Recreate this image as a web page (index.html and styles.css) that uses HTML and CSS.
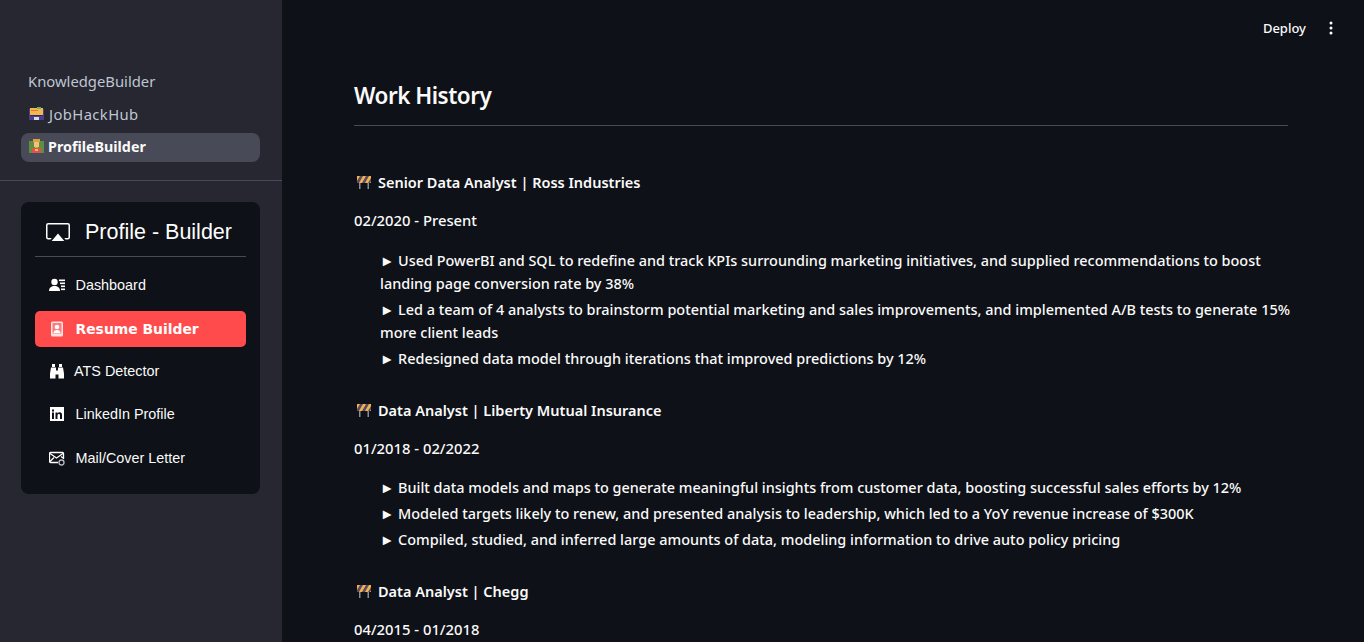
FILE: index.html
```html
<!DOCTYPE html>
<html lang="en">
<head>
    <meta charset="utf-8">
    <title>ProfileBuilder</title>
    <link rel="stylesheet" href="styles.css">
</head>
<body>
<div class="app">

    <!-- sidebar -->
    <aside class="sidebar">
        <nav class="pages">
            <a class="page">KnowledgeBuilder</a>
            <a class="page">
                <svg class="pixel" viewBox="0 0 14 14" width="15" height="15" shape-rendering="crispEdges">
                    <rect x="0" y="3" width="14" height="10" fill="#4b3f8f"/>
                    <rect x="1" y="2" width="12" height="6" fill="#f2b84e"/>
                    <rect x="2" y="4" width="6" height="1" fill="#e8743b"/>
                    <rect x="7" y="1" width="4" height="2" fill="#5bb974"/>
                    <rect x="1" y="8" width="12" height="1" fill="#2f2a5e"/>
                    <rect x="5" y="10" width="4" height="3" fill="#d9d9e3"/>
                </svg>
                <span class="wide">JobHackHub</span>
            </a>
            <a class="page active">
                <svg class="pixel" viewBox="0 0 14 14" width="15" height="15" shape-rendering="crispEdges">
                    <rect x="0" y="2" width="14" height="11" fill="#5f8f3e"/>
                    <rect x="4" y="0" width="6" height="3" fill="#d9a441"/>
                    <rect x="5" y="3" width="4" height="4" fill="#f0c27b"/>
                    <rect x="6" y="7" width="2" height="1" fill="#d9a441"/>
                    <rect x="3" y="8" width="8" height="5" fill="#d9534f"/>
                    <rect x="6" y="9" width="2" height="2" fill="#f2c14e"/>
                </svg>
                <span>ProfileBuilder</span>
            </a>
        </nav>
        <hr class="side-rule">

        <div class="menu">
            <div class="menu-title">
                <svg viewBox="0 0 16 16" width="24" height="24" fill="#fff">
                    <path d="M1.500 2h13A1.500 1.500 0 0 1 16 3.500v8a1.500 1.500 0 0 1-1.500 1.500H13l-.8-1h2.300a.5.5 0 0 0 .5-.5v-8a.5.5 0 0 0-.5-.5h-13a.5.5 0 0 0-.5.5v8a.5.5 0 0 0 .5.5h2.300l-.8 1H1.500A1.500 1.500 0 0 1 0 11.500v-8A1.500 1.500 0 0 1 1.500 2z"/>
                    <path d="M8 9l4.200 5H3.800z"/>
                </svg>
                <span>Profile - Builder</span>
            </div>
            <hr class="menu-rule">
            <a class="item first">
                <svg viewBox="0 0 16 16" width="16" height="16" fill="#fff">
                    <circle cx="5.500" cy="5" r="3.200"/>
                    <path d="M0 14C0 10.500 2.500 9 5.500 9s5.500 1.500 5.500 5z"/>
                    <rect x="10" y="2.500" width="6" height="1.600"/>
                    <rect x="11" y="5.500" width="5" height="1.600"/>
                    <rect x="12" y="8.500" width="4" height="1.600"/>
                    <rect x="12" y="11.500" width="4" height="1.600"/>
                </svg>
                <span>Dashboard</span>
            </a>
            <a class="item selected">
                <svg viewBox="0 0 16 16" width="16" height="16">
                    <rect x="2" y="0.500" width="12" height="15" rx="1.500" fill="#ffe3e3"/>
                    <rect x="3.500" y="2" width="9" height="10.500" fill="#ff7a7a"/>
                    <circle cx="8" cy="6" r="2.300" fill="#fff"/>
                    <path d="M4.500 12c0-2 1.500-3 3.500-3s3.500 1 3.500 3z" fill="#fff"/>
                </svg>
                <span>Resume Builder</span>
            </a>
            <a class="item">
                <svg viewBox="0 0 16 16" width="16" height="16" fill="#fff">
                    <path d="M3 1h3v3H3zM10 1h3v3h-3z"/>
                    <path d="M2 4.500h5v3h2v-3h5l1 6v5H9.500v-4h-3v4H1v-5z"/>
                </svg>
                <span class="tight">ATS Detector</span>
            </a>
            <a class="item">
                <svg viewBox="0 0 16 16" width="16" height="16">
                    <rect x="1" y="1" width="14" height="14" fill="#fff"/>
                    <rect x="3" y="6.500" width="2" height="6.500" fill="#0e1117"/>
                    <rect x="3" y="3.500" width="2" height="2" fill="#0e1117"/>
                    <path d="M6.500 6.500h2v1c.5-.8 1.300-1.200 2.200-1.200 1.600 0 2.300 1 2.300 2.700v4h-2V9.500c0-.8-.3-1.400-1.100-1.400s-1.400.6-1.400 1.500V13h-2z" fill="#0e1117"/>
                </svg>
                <span>LinkedIn Profile</span>
            </a>
            <a class="item">
                <svg viewBox="0 0 16 16" width="16" height="16" fill="none" stroke="#fff" stroke-width="1.300">
                    <path d="M9 12.500H1.500a1 1 0 0 1-1-1v-8a1 1 0 0 1 1-1h12a1 1 0 0 1 1 1V9"/>
                    <path d="M1 3.500l6.500 4.500L14 3.500"/>
                    <path d="M1 11.500l4-4M14 8l-2-1.500"/>
                    <circle cx="12.500" cy="12.500" r="2.500" stroke="#b8bcc6"/>
                </svg>
                <span>Mail/Cover Letter</span>
            </a>
        </div>
    </aside>

    <!-- main -->
    <main class="main">
        <header class="topbar">
            <span class="deploy">Deploy</span>
            <svg viewBox="0 0 4 14" width="4" height="14" fill="#fff">
                <circle cx="2" cy="2" r="1.500"/>
                <circle cx="2" cy="7" r="1.500"/>
                <circle cx="2" cy="12" r="1.500"/>
            </svg>
        </header>

        <section class="content">
            <h2>Work History</h2>
            <hr class="rule">

            <article class="job">
                <h5>
                    <svg class="barrier" viewBox="0 0 16 14" width="16" height="14">
                        <rect x="3" y="7" width="1.500" height="7" fill="#8a8d96"/>
                        <rect x="11.500" y="7" width="1.500" height="7" fill="#8a8d96"/>
                        <rect x="1" y="1" width="14" height="7" fill="#f4b24a"/>
                        <path d="M4 1h3L3 8H1v-2zM10 1h3L9 8H6zM15 3v3.500L14 8h-2z" fill="#5b4a63"/>
                    </svg>
                    <span>Senior Data Analyst | Ross Industries</span>
                </h5>
                <p class="dates">02/2020 - Present</p>
                <ul>
                    <li>► Used PowerBI and SQL to redefine and track KPIs surrounding marketing initiatives, and supplied recommendations to boost landing page conversion rate by 38%</li>
                    <li>► Led a team of 4 analysts to brainstorm potential marketing and sales improvements, and implemented A/B tests to generate 15% more client leads</li>
                    <li>► Redesigned data model through iterations that improved predictions by 12%</li>
                </ul>
            </article>

            <article class="job">
                <h5>
                    <svg class="barrier" viewBox="0 0 16 14" width="16" height="14">
                        <rect x="3" y="7" width="1.500" height="7" fill="#8a8d96"/>
                        <rect x="11.500" y="7" width="1.500" height="7" fill="#8a8d96"/>
                        <rect x="1" y="1" width="14" height="7" fill="#f4b24a"/>
                        <path d="M4 1h3L3 8H1v-2zM10 1h3L9 8H6zM15 3v3.500L14 8h-2z" fill="#5b4a63"/>
                    </svg>
                    <span>Data Analyst | Liberty Mutual Insurance</span>
                </h5>
                <p class="dates">01/2018 - 02/2022</p>
                <ul>
                    <li>► Built data models and maps to generate meaningful insights from customer data, boosting successful sales efforts by 12%</li>
                    <li>► Modeled targets likely to renew, and presented analysis to leadership, which led to a YoY revenue increase of $300K</li>
                    <li>► Compiled, studied, and inferred large amounts of data, modeling information to drive auto policy pricing</li>
                </ul>
            </article>

            <article class="job">
                <h5>
                    <svg class="barrier" viewBox="0 0 16 14" width="16" height="14">
                        <rect x="3" y="7" width="1.500" height="7" fill="#8a8d96"/>
                        <rect x="11.500" y="7" width="1.500" height="7" fill="#8a8d96"/>
                        <rect x="1" y="1" width="14" height="7" fill="#f4b24a"/>
                        <path d="M4 1h3L3 8H1v-2zM10 1h3L9 8H6zM15 3v3.500L14 8h-2z" fill="#5b4a63"/>
                    </svg>
                    <span>Data Analyst | Chegg</span>
                </h5>
                <p class="dates">04/2015 - 01/2018</p>
            </article>
        </section>
    </main>
</div>
</body>
</html>
```

FILE: styles.css
```css
* {
    box-sizing: border-box;
}

html, body {
    margin: 0;
    height: 100%;
    overflow: hidden;
}

body {
    background: #0e1117;
    color: #fafafa;
    font-family: "Noto Sans", sans-serif;
}

.app {
    display: flex;
    height: 642px;
}

/* sidebar */
.sidebar {
    width: 282px;
    flex: none;
    background: #262730;
    padding-top: 67.5px;
}

.pages {
    display: flex;
    flex-direction: column;
    gap: 3.5px;
    padding: 0 22px 0 21px;
}

.page {
    display: flex;
    align-items: center;
    gap: 5px;
    height: 29px;
    padding: 0 7px 2px;
    border-radius: 8px;
    font-size: 14.8px;
    color: #bfc5d3;
}

.page svg {
    margin-left: 1px;
}

.page .wide {
    letter-spacing: 0.4px;
}

.page.active {
    gap: 4px;
    background: #484a57;
    color: #fafafa;
    font-size: 14.3px;
    font-weight: 700;
}

.side-rule {
    margin: 18.5px 0 21px;
    border: 0;
    border-top: 1px solid #484a57;
}

.menu {
    margin: 0 22px 0 21px;
    height: 292px;
    padding: 15px 14px;
    background: #0e1117;
    border-radius: 8px;
    font-family: "Liberation Sans", Arial, sans-serif;
}

.menu-title {
    display: flex;
    align-items: center;
    gap: 15px;
    height: 30px;
    padding-left: 11px;
    font-size: 21.5px;
    color: #fff;
}

.menu-rule {
    margin: 9px 0 10px;
    border: 0;
    border-top: 1px solid #484a57;
}

.item {
    display: flex;
    align-items: center;
    gap: 10.5px;
    height: 36px;
    margin-bottom: 7.25px;
    padding-left: 14px;
    border-radius: 5px;
    font-size: 14.4px;
    color: #fafafa;
}

.item.first {
    margin-bottom: 8px;
}

.item .tight {
    margin-left: -1.5px;
}

.item.selected {
    margin-bottom: 6px;
    background: #ff4b4b;
    color: #fff;
    font-family: "DejaVu Sans", sans-serif;
    font-size: 13.9px;
    font-weight: 700;
}

/* main */
.main {
    flex: 1;
    min-width: 0;
    position: relative;
}

.topbar {
    position: absolute;
    top: 19px;
    right: 31px;
    display: flex;
    align-items: center;
    gap: 23px;
}

.deploy {
    font-size: 13px;
    font-weight: 500;
}

.content {
    padding: 78px 76px 0 72px;
}

h2 {
    margin: 0;
    font-size: 22.5px;
    font-weight: 600;
    line-height: 36px;
    letter-spacing: -0.5px;
}

.rule {
    margin: 11px 0 0;
    border: 0;
    border-top: 1px solid #484a57;
}

.job {
    margin-bottom: 28px;
}

.rule + .job {
    margin-top: 44px;
}

h5 {
    display: flex;
    align-items: center;
    gap: 6px;
    margin: 0 0 15px;
    padding-left: 2px;
    font-size: 14.5px;
    line-height: 24px;
    font-weight: 600;
}

.dates {
    margin: 0 0 17.5px;
    font-size: 14.8px;
    font-weight: 500;
    line-height: 22px;
}

ul {
    margin: 0 -6px 0 0;
    padding: 0 0 0 26px;
    list-style: none;
}

li {
    font-size: 14.45px;
    font-weight: 500;
    line-height: 23px;
    margin-bottom: 3px;
}
```
